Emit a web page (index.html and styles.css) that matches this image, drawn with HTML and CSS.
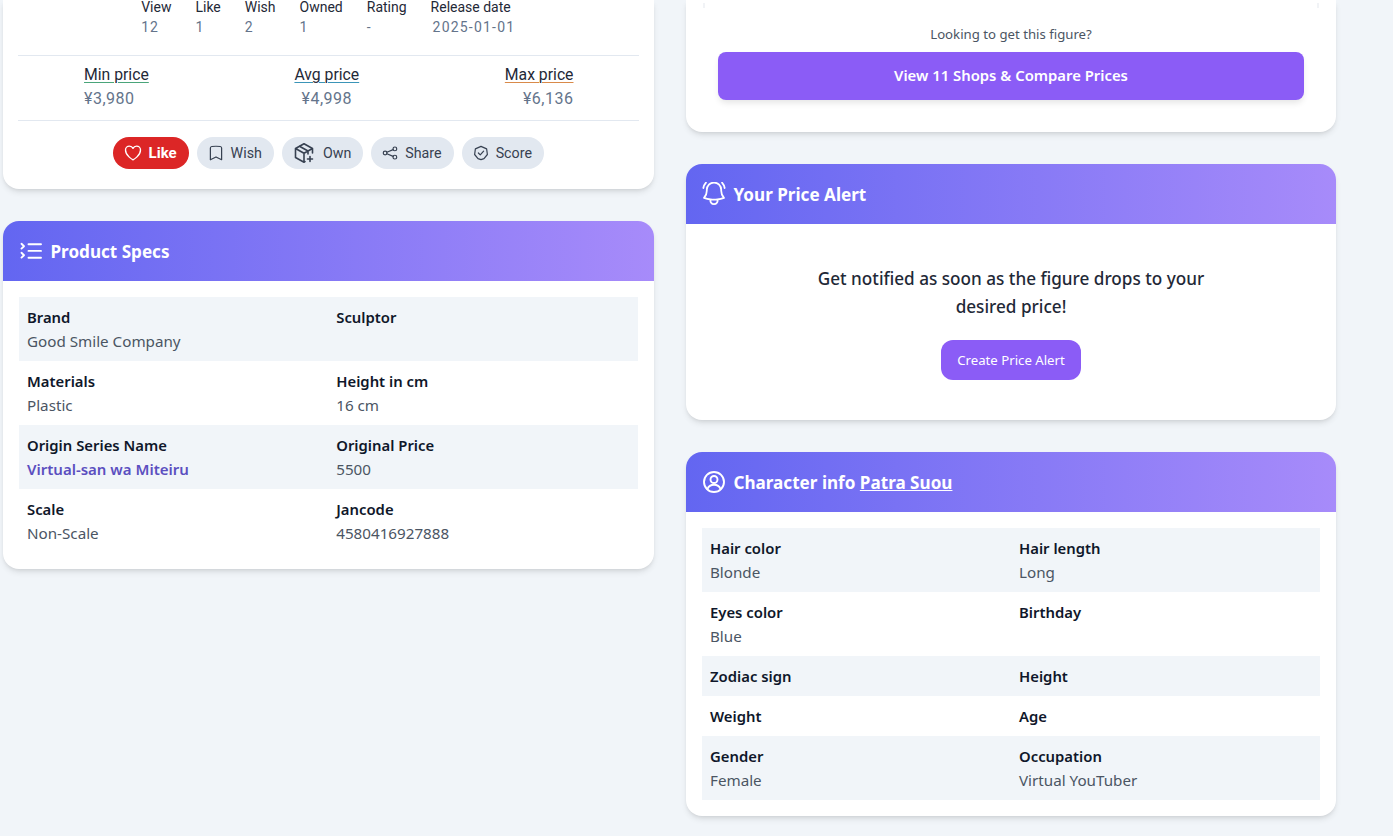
FILE: index.html
```html
<!DOCTYPE html>
<html lang="en">
<head>
  <meta charset="UTF-8" />
  <title>Figure detail</title>
  <link rel="stylesheet" href="styles.css">
</head>
<body>
  <div class="layout">
    <div class="column">
      <section class="card card-cut summary">
        <div class="stats">
          <div class="stat"><span>View</span><b>12</b></div>
          <div class="stat"><span>Like</span><b>1</b></div>
          <div class="stat"><span>Wish</span><b>2</b></div>
          <div class="stat"><span>Owned</span><b>1</b></div>
          <div class="stat"><span>Rating</span><b>-</b></div>
          <div class="stat"><span>Release date</span><b class="date">2025-01-01</b></div>
        </div>
        <div class="prices">
          <div class="price"><span class="u-green">Min price</span><b>¥3,980</b></div>
          <div class="price price-mid"><span class="u-blue">Avg price</span><b>¥4,998</b></div>
          <div class="price price-end"><span class="u-orange">Max price</span><b>¥6,136</b></div>
        </div>
        <div class="actions">
          <button class="pill pill-like">
            <svg viewBox="0 0 24 24" width="20" height="20"><path d="M21 8.250c0-2.490-2.100-4.500-4.690-4.500-1.930 0-3.590 1.120-4.310 2.730-.720-1.610-2.380-2.730-4.310-2.730C5.100 3.750 3 5.760 3 8.250c0 7.220 9 12 9 12s9-4.780 9-12z"/></svg>
            Like
          </button>
          <button class="pill">
            <svg viewBox="0 0 24 24" width="18" height="18"><path d="M17.600 3.300c1.100.130 1.900 1.080 1.900 2.190V21L12 17.250 4.500 21V5.490c0-1.110.8-2.060 1.900-2.190a48.500 48.500 0 0 1 11.200 0z"/></svg>
            Wish
          </button>
          <button class="pill pill-own">
            <svg viewBox="0 0 24 24" width="24" height="24"><path d="M20.500 12V7.500L12 2.800 3.500 7.500v9l8.500 4.700 1-.55M3.500 7.500 12 12.200l8.500-4.700M12 12.200v9M7.500 5.200l8.500 4.800v3"/><path d="M18 15.500v5M15.500 18h5"/></svg>
            Own
          </button>
          <button class="pill">
            <svg viewBox="0 0 24 24" width="18" height="18"><circle cx="5.500" cy="12" r="2.500"/><circle cx="18.500" cy="6.500" r="2.500"/><circle cx="18.500" cy="17.500" r="2.500"/><path d="m7.800 11 8.400-3.500M7.800 13l8.400 3.500"/></svg>
            Share
          </button>
          <button class="pill">
            <svg viewBox="0 0 24 24" width="18" height="18"><path d="M12 3.200l7.500 3.300 1 7.500-4.500 5.500-4 1.300-4-1.300L3.500 14l1-7.500z"/><path d="m8.500 12 2.500 2.500 4.500-5"/></svg>
            Score
          </button>
        </div>
      </section>

      <section class="card">
        <header class="card-head">
          <svg class="heavy" viewBox="0 0 24 24" width="24" height="24"><path d="M9.500 5.300H22M9.500 11.900H22M9.500 18.700H22"/><path d="m2.500 4.800 2.500 2.400-2.500 2.400M2.500 13.800l2.500 2.400-2.500 2.400"/></svg>
          <h2>Product Specs</h2>
        </header>
        <div class="table">
          <div class="row">
            <div class="cell"><strong>Brand</strong><span>Good Smile Company</span></div>
            <div class="cell"><strong>Sculptor</strong></div>
          </div>
          <div class="row">
            <div class="cell"><strong>Materials</strong><span>Plastic</span></div>
            <div class="cell"><strong>Height in cm</strong><span>16 cm</span></div>
          </div>
          <div class="row">
            <div class="cell"><strong>Origin Series Name</strong><a href="#">Virtual-san wa Miteiru</a></div>
            <div class="cell"><strong>Original Price</strong><span>5500</span></div>
          </div>
          <div class="row">
            <div class="cell"><strong>Scale</strong><span>Non-Scale</span></div>
            <div class="cell"><strong>Jancode</strong><span>4580416927888</span></div>
          </div>
        </div>
      </section>
    </div>

    <div class="column">
      <section class="card card-cut buy">
        <div class="chart-end"></div>
        <p class="buy-note">Looking to get this figure?</p>
        <a class="buy-btn" href="#">View 11 Shops &amp; Compare Prices</a>
      </section>

      <section class="card">
        <header class="card-head">
          <svg viewBox="2 2.500 20 20" width="24" height="24"><path d="M14.857 17.082a23.848 23.848 0 0 0 5.454-1.310A8.967 8.967 0 0 1 18 9.750V9A6 6 0 0 0 6 9v.75a8.967 8.967 0 0 1-2.312 6.022c1.733.64 3.560 1.085 5.455 1.310m5.714 0a24.255 24.255 0 0 1-5.714 0m5.714 0a3 3 0 1 1-5.714 0M3.124 7.500A8.969 8.969 0 0 1 5.292 3m13.416 0a8.969 8.969 0 0 1 2.168 4.500"/></svg>
          <h2>Your Price Alert</h2>
        </header>
        <div class="alert">
          <p>Get notified as soon as the figure drops to your desired price!</p>
          <button class="alert-btn">Create Price Alert</button>
        </div>
      </section>

      <section class="card">
        <header class="card-head">
          <svg class="heavy" viewBox="0 0 24 24" width="24" height="24"><circle cx="12" cy="12" r="10"/><circle cx="12" cy="9.500" r="3.500"/><path d="M5.500 19c1-2.800 3.500-4.300 6.500-4.300s5.500 1.500 6.500 4.300"/></svg>
          <h2>Character info <a href="#">Patra Suou</a></h2>
        </header>
        <div class="table">
          <div class="row">
            <div class="cell"><strong>Hair color</strong><span>Blonde</span></div>
            <div class="cell"><strong>Hair length</strong><span>Long</span></div>
          </div>
          <div class="row">
            <div class="cell"><strong>Eyes color</strong><span>Blue</span></div>
            <div class="cell"><strong>Birthday</strong></div>
          </div>
          <div class="row">
            <div class="cell"><strong>Zodiac sign</strong></div>
            <div class="cell"><strong>Height</strong></div>
          </div>
          <div class="row">
            <div class="cell"><strong>Weight</strong></div>
            <div class="cell"><strong>Age</strong></div>
          </div>
          <div class="row">
            <div class="cell"><strong>Gender</strong><span>Female</span></div>
            <div class="cell"><strong>Occupation</strong><span>Virtual YouTuber</span></div>
          </div>
        </div>
      </section>
    </div>
  </div>
</body>
</html>
```

FILE: styles.css
```css
* {
  box-sizing: border-box;
}

html, body {
  height: 836px;
  overflow: hidden;
}

body {
  margin: 0;
  font-family: "Noto Sans", "Open Sans", sans-serif;
  font-size: 15.2px;
  line-height: 24px;
  background: #f1f5f9;
  color: #1f2937;
}

.layout {
  display: grid;
  grid-template-columns: 650.5px 650px;
  column-gap: 32.5px;
  padding-left: 3px;
  align-items: start;
}

.column {
  display: flex;
  flex-direction: column;
  gap: 32px;
}

.card {
  background: #fff;
  border-radius: 16px;
  overflow: hidden;
  box-shadow: 0 4px 6px -1px rgba(0, 0, 0, .1), 0 2px 4px -2px rgba(0, 0, 0, .1);
}

.card-cut {
  border-radius: 0 0 16px 16px;
}

.summary {
  padding: 0 16px 20px;
  font-family: Roboto, sans-serif;
}

.stats {
  display: flex;
  justify-content: center;
  gap: 24px;
  height: 56px;
  margin: 0 -1px;
  border-bottom: 1px solid #e2e8f0;
  font-size: 14px;
  line-height: 20px;
}

.stat {
  display: flex;
  flex-direction: column;
  margin-top: -3px;
}

.stat span {
  color: #1f2937;
}

.stat b {
  font-weight: 400;
  color: #64748b;
  letter-spacing: 1px;
}

.stat .date {
  margin-left: 2px;
  letter-spacing: 1.2px;
}

.prices {
  display: flex;
  justify-content: space-between;
  height: 65px;
  padding: 7px 65px 0 66px;
  margin: 0 -1px;
  border-bottom: 1px solid #e2e8f0;
  font-size: 15.75px;
}

.price {
  display: flex;
  flex-direction: column;
  line-height: 24px;
}

.price-mid {
  align-items: center;
}

.price-end {
  align-items: flex-end;
}

.price span {
  color: #1f2937;
  text-decoration: underline;
  text-underline-offset: 2px;
  text-decoration-thickness: 1px;
}

.u-green { text-decoration-color: #4aa57a !important; }
.u-blue { text-decoration-color: #3b95b8 !important; }
.u-orange { text-decoration-color: #d98a4a !important; }

.price b {
  font-weight: 400;
  color: #64748b;
  font-size: 16px;
  letter-spacing: .5px;
}

.actions {
  display: flex;
  justify-content: center;
  gap: 8px;
  margin-top: 16px;
}

.pill {
  display: flex;
  align-items: center;
  gap: 6px;
  height: 32px;
  padding: 0 12px 0 10px;
  border: none;
  border-radius: 16px;
  background: #e2e8f0;
  color: #374151;
  font-family: inherit;
  font-size: 14.25px;
}

.pill svg {
  fill: none;
  stroke: currentColor;
  stroke-width: 1.6;
  stroke-linecap: round;
  stroke-linejoin: round;
}

.pill-own {
  gap: 7px;
}

.pill-like {
  background: #dc2626;
  color: #fff;
  font-size: 15px;
  font-weight: 700;
}

.card-head {
  display: flex;
  align-items: center;
  gap: 7.5px;
  height: 60px;
  padding: 0 16px;
  background: linear-gradient(to right, #6366f1, #a78bfa);
  color: #fff;
}

.card-head svg {
  fill: none;
  stroke: currentColor;
  stroke-width: 1.5;
  stroke-linecap: round;
  stroke-linejoin: round;
}

.card-head .heavy {
  stroke-width: 1.9;
}

.card-head h2 {
  margin: 0;
  padding-top: 2px;
  font-size: 17.1px;
  line-height: 28px;
  font-weight: 700;
}

.card-head a {
  color: #fff;
}

.table {
  padding: 16px;
}

.row {
  display: grid;
  grid-template-columns: 1fr 1fr;
}

.row:nth-child(odd) {
  background: #f1f5f9;
}

.cell {
  display: flex;
  flex-direction: column;
  padding: 8px;
}

.cell strong {
  font-size: 14.85px;
  font-weight: 600;
  color: #0f172a;
}

.cell span {
  color: #4b5563;
}

.cell a {
  color: #5b4fc0;
  font-size: 15px;
  font-weight: 600;
  text-decoration: none;
}

.buy {
  padding: 0 32px 32px;
  text-align: center;
}

.chart-end {
  height: 8px;
  margin: 0 -15px 16px;
  background:
    linear-gradient(#f1f3f6, #f1f3f6) left bottom / 2px 5px no-repeat,
    linear-gradient(#f1f3f6, #f1f3f6) right bottom / 2px 5px no-repeat;
}

.buy-note {
  margin: 0 0 8px;
  font-size: 13.2px;
  line-height: 20px;
  color: #4b5563;
}

.buy-btn {
  display: block;
  height: 48px;
  line-height: 47px;
  border-radius: 8px;
  background: #8b5cf6;
  color: #fff;
  font-weight: 600;
  font-size: 14.85px;
  text-decoration: none;
  box-shadow: 0 4px 6px -1px rgba(0, 0, 0, .1);
}

.alert {
  padding: 41px 32px 40px;
  text-align: center;
}

.alert p {
  width: 420px;
  margin: 0 auto 19px;
  font-size: 17.15px;
  line-height: 28px;
  font-weight: 500;
}

.alert-btn {
  height: 40px;
  padding: 0 16px;
  border: none;
  border-radius: 12px;
  background: #8b5cf6;
  color: #fff;
  font-family: inherit;
  font-size: 13.2px;
}
```
